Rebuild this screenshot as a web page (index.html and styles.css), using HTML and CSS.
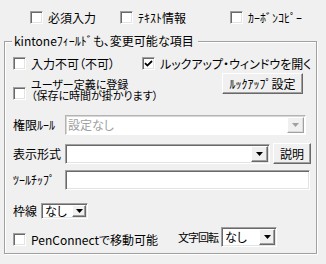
FILE: index.html
```html
<!doctype html>
<html lang="ja">
<head>
    <meta charset="UTF-8">
    <title>項目の設定</title>
    <link rel="stylesheet" href="styles.css">
</head>
<body>
<div class="dialog">

    <div class="top">
        <label class="check w1"><span class="box"></span>必須入力</label>
        <label class="check w2"><span class="box"></span><span><span class="hk">ﾃｷｽﾄ</span>情報</span></label>
        <label class="check"><span class="box"></span><span class="hk">ｶｰﾎﾞﾝｺﾋﾟｰ</span></label>
    </div>

    <div class="group">
        <div class="caption">kintone<span class="hk">ﾌｨｰﾙﾄﾞ</span>も、変更可能な項目</div>

        <div class="row r1">
            <label class="check c1"><span class="box"></span>入力不可（不可）</label>
            <label class="check"><span class="box"><svg width="9" height="9" viewBox="0 0 9 9"><path d="M1 4.2 3.4 6.6 8 2" fill="none" stroke="#000" stroke-width="1.8"/></svg></span>ルックアップ・ウィンドウを開く</label>
        </div>

        <div class="row r2">
            <label class="check"><span class="box"></span><span class="lines">ユーザー定義に登録<br>（保存に時間が掛かります）</span></label>
            <button class="btn lookup"><span class="hk">ﾙｯｸｱｯﾌﾟ</span>設定</button>
        </div>

        <div class="row field r3">
            <span class="lbl">権限<span class="hk">ﾙｰﾙ</span></span>
            <div class="combo wide disabled">
                <span class="val">設定なし</span>
                <span class="arrow"><svg width="7" height="4" viewBox="0 0 7 4"><path d="M0 0h7L3.5 4z"/></svg></span>
            </div>
        </div>

        <div class="row field r4">
            <span class="lbl">表示形式</span>
            <div class="combo mid">
                <span class="val"></span>
                <span class="arrow"><svg width="7" height="4" viewBox="0 0 7 4"><path d="M0 0h7L3.5 4z"/></svg></span>
            </div>
            <button class="btn small">説明</button>
        </div>

        <div class="row field r5">
            <span class="lbl hk">ﾂｰﾙﾁｯﾌﾟ</span>
            <div class="edit"></div>
        </div>

        <div class="row field r6">
            <span class="lbl short">枠線</span>
            <div class="combo tiny">
                <span class="val">なし</span>
                <span class="arrow"><svg width="7" height="4" viewBox="0 0 7 4"><path d="M0 0h7L3.5 4z"/></svg></span>
            </div>
        </div>

        <div class="row field r7">
            <label class="check pen"><span class="box"></span>PenConnectで移動可能</label>
            <span class="lbl rot">文字回転</span>
            <div class="combo rotate">
                <span class="val">なし</span>
                <span class="arrow"><svg width="7" height="4" viewBox="0 0 7 4"><path d="M0 0h7L3.5 4z"/></svg></span>
            </div>
        </div>
    </div>

</div>
</body>
</html>
```

FILE: styles.css
```css
body {
    margin: 0;
    background: #f0f0f0;
    color: #000;
    font-family: "Noto Sans CJK JP", "Liberation Sans", sans-serif;
    font-size: 12px;
    font-feature-settings: "palt";
}

/* 半角カナはプロポーショナルにしない */
.hk {
    font-feature-settings: normal;
}

.dialog {
    width: 326px;
    height: 264px;
    overflow: hidden;
}

/* チェックボックス */
.check {
    display: flex;
    align-items: center;
    gap: 5px;
    line-height: 13px;
    white-space: nowrap;
}

.box {
    flex: none;
    display: flex;
    align-items: center;
    justify-content: center;
    width: 13px;
    height: 13px;
    box-sizing: border-box;
    background: #fff;
    border: 1px solid;
    border-color: #a0a0a0 #fff #fff #a0a0a0;
    box-shadow: inset 1px 1px 0 #696969, inset -1px -1px 0 #e3e3e3;
}

.top {
    display: flex;
    height: 13px;
    padding: 11px 0 0 30px;
}

.top .w1 {
    width: 90px;
}

.top .w2 {
    width: 110px;
}

/* グループ枠 */
.group {
    margin: 17px 0 0 4px;
    width: 313px;
    height: 213px;
    box-sizing: border-box;
    border: 1px solid #a0a0a0;
    box-shadow: 1px 1px 0 #fff, inset 1px 1px 0 #fff;
    padding-left: 8px;
}

.caption {
    width: fit-content;
    margin: -8px 0 0 -1px;
    padding: 0 4px 0 2px;
    background: #f0f0f0;
    line-height: 14px;
}

.row {
    display: flex;
}

.r1 {
    margin-top: 8px;
    height: 14px;
    align-items: center;
}

.r1 .c1 {
    width: 129px;
}

.r2 {
    margin-top: 3px;
    align-items: flex-start;
}

.r2 .check {
    align-items: flex-start;
}

.r2 .box {
    margin-top: 14px;
}

/* 2行のラベルは行間が詰まっている */
.lines {
    margin-top: 6px;
    font-size: 11px;
    line-height: 11px;
}

/* ボタン */
.btn {
    box-sizing: border-box;
    padding: 0;
    font: inherit;
    color: #000;
    background: #f0f0f0;
    border: 1px solid;
    border-color: #fff #696969 #696969 #fff;
    box-shadow: inset -1px -1px 0 #a0a0a0;
}

.lookup {
    margin: 0 13px 0 auto;
    width: 81px;
    height: 21px;
}

.small {
    width: 38px;
    height: 21px;
    margin-left: 3px;
}

.field {
    align-items: center;
}

.lbl {
    width: 52px;
    line-height: 14px;
    white-space: nowrap;
}

.lbl.short {
    width: 28px;
}

.lbl.rot {
    width: 43px;
    font-size: 11px;
    letter-spacing: -1px;
}

/* コンボ・テキスト */
.combo, .edit {
    display: flex;
    align-items: center;
    box-sizing: border-box;
    background: #fff;
    border: 1px solid;
    border-color: #a0a0a0 #fff #fff #a0a0a0;
    box-shadow: inset 1px 1px 0 #696969, inset -1px -1px 0 #e3e3e3;
    padding: 1px;
}

.combo .val {
    flex: 1;
    padding-left: 2px;
    line-height: 14px;
}

.arrow {
    display: flex;
    align-items: center;
    justify-content: center;
    align-self: stretch;
    width: 17px;
    box-sizing: border-box;
    background: #f0f0f0;
    border: 1px solid;
    border-color: #fff #696969 #696969 #fff;
    box-shadow: inset -1px -1px 0 #a0a0a0;
}

.combo.disabled {
    border-color: #b4b4b4 #fff #fff #b4b4b4;
    box-shadow: inset 1px 1px 0 #d6d6d6;
}

.disabled .val {
    color: #a0a0a0;
    padding-left: 1px;
}

.disabled .arrow {
    border-color: #fff #a0a0a0 #a0a0a0 #fff;
    box-shadow: inset -1px -1px 0 #dcdcdc;
}

.disabled .arrow svg {
    fill: #a0a0a0;
}

.r3 {
    margin-top: 14px;
}

.wide {
    width: 241px;
    height: 20px;
}

.r4 {
    margin-top: 8px;
}

.mid {
    width: 205px;
    height: 20px;
}

.r5 {
    margin-top: 6px;
}

.edit {
    width: 245px;
    height: 20px;
}

.r6 {
    margin-top: 13px;
}

.tiny {
    width: 47px;
    height: 16px;
}

.tiny .arrow {
    width: 14px;
}

.r7 {
    margin-top: 8px;
    height: 20px;
}

.pen {
    width: 165px;
    margin-top: 4px;
}

.rotate {
    width: 56px;
    height: 20px;
}

.rotate .arrow {
    width: 16px;
}
```
